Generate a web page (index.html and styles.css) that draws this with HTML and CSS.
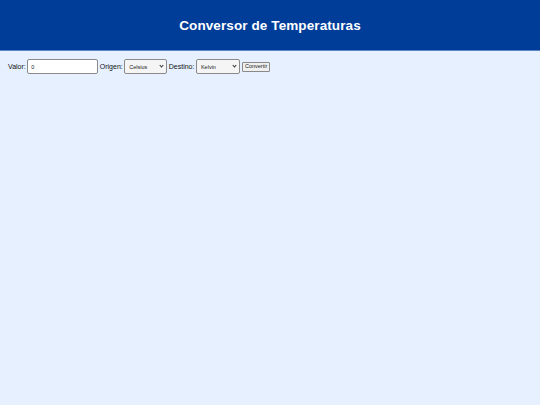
FILE: index.html
```html
<!DOCTYPE html>
<html lang="es">
<head>
<meta charset="utf-8">
<title>Conversor de Temperaturas</title>
<link rel="stylesheet" href="styles.css">
</head>
<body>
<header class="header">
  <h1 class="title">Conversor de Temperaturas</h1>
</header>
<main class="content">
  <form class="form" onsubmit="return false;">
    <label class="label" for="valor">Valor:</label>
    <input class="input" id="valor" type="text" value="0">
    <label class="label" for="origen">Origen:</label>
    <span class="select-wrap">
      <select class="select" id="origen">
        <option>Celsius</option>
        <option>Fahrenheit</option>
        <option>Kelvin</option>
      </select>
    </span>
    <label class="label" for="destino">Destino:</label>
    <span class="select-wrap select-wrap-wide">
      <select class="select" id="destino">
        <option>Celsius</option>
        <option>Fahrenheit</option>
        <option selected>Kelvin</option>
      </select>
    </span>
    <button class="button" type="button">Convertir</button>
  </form>
</main>
</body>
</html>
```
FILE: styles.css
```css
html, body {
  margin: 0;
  padding: 0;
}
body {
  background: #e6f0ff;
  font-family: "Liberation Sans", Arial, sans-serif;
  min-height: 405px;
}
.header {
  background: #003d99;
  height: 51px;
  display: flex;
  align-items: center;
  justify-content: center;
  border-bottom: 1px solid #5a86c8;
  box-sizing: border-box;
}
.title {
  margin: 0;
  color: #ffffff;
  font-size: 13.5px;
  font-weight: bold;
  letter-spacing: 0.1px;
}
.content {
  padding: 8px 8px;
}
.form {
  display: flex;
  align-items: center;
  gap: 1.5px;
  height: 15px;
}
.label {
  font-size: 7px;
  color: #111;
}
.input {
  box-sizing: border-box;
  width: 71px;
  height: 15px;
  font-size: 5.5px;
  font-family: "Liberation Sans", Arial, sans-serif;
  padding: 0 3px;
  border: 1px solid #8a8a8a;
  border-radius: 2px;
  background: #fff;
  color: #222;
  outline: none;
}
.select-wrap {
  position: relative;
  display: block;
  width: 43px;
  height: 15px;
}
.select-wrap-wide {
  width: 44px;
}
.select-wrap::after {
  content: "";
  position: absolute;
  right: 4px;
  top: 5px;
  width: 2px;
  height: 2px;
  border-right: 1px solid #333;
  border-bottom: 1px solid #333;
  transform: rotate(45deg);
  pointer-events: none;
}
.select {
  -webkit-appearance: none;
  appearance: none;
  display: block;
  margin: 0;
  box-sizing: border-box;
  width: 100%;
  height: 15px;
  font-size: 5.5px;
  font-family: "Liberation Sans", Arial, sans-serif;
  padding: 0 4px;
  border: 1px solid #8a8a8a;
  border-radius: 2px;
  background: #f5f5f5;
  color: #222;
  outline: none;
}
.button {
  box-sizing: border-box;
  height: 10px;
  font-size: 5.5px;
  padding: 0 2px;
  font-family: "Liberation Sans", Arial, sans-serif;
  border: 1px solid #8a8a8a;
  border-radius: 1px;
  background: #efefef;
  color: #222;
  line-height: 1;
  margin-left: 0.5px;
}
```
